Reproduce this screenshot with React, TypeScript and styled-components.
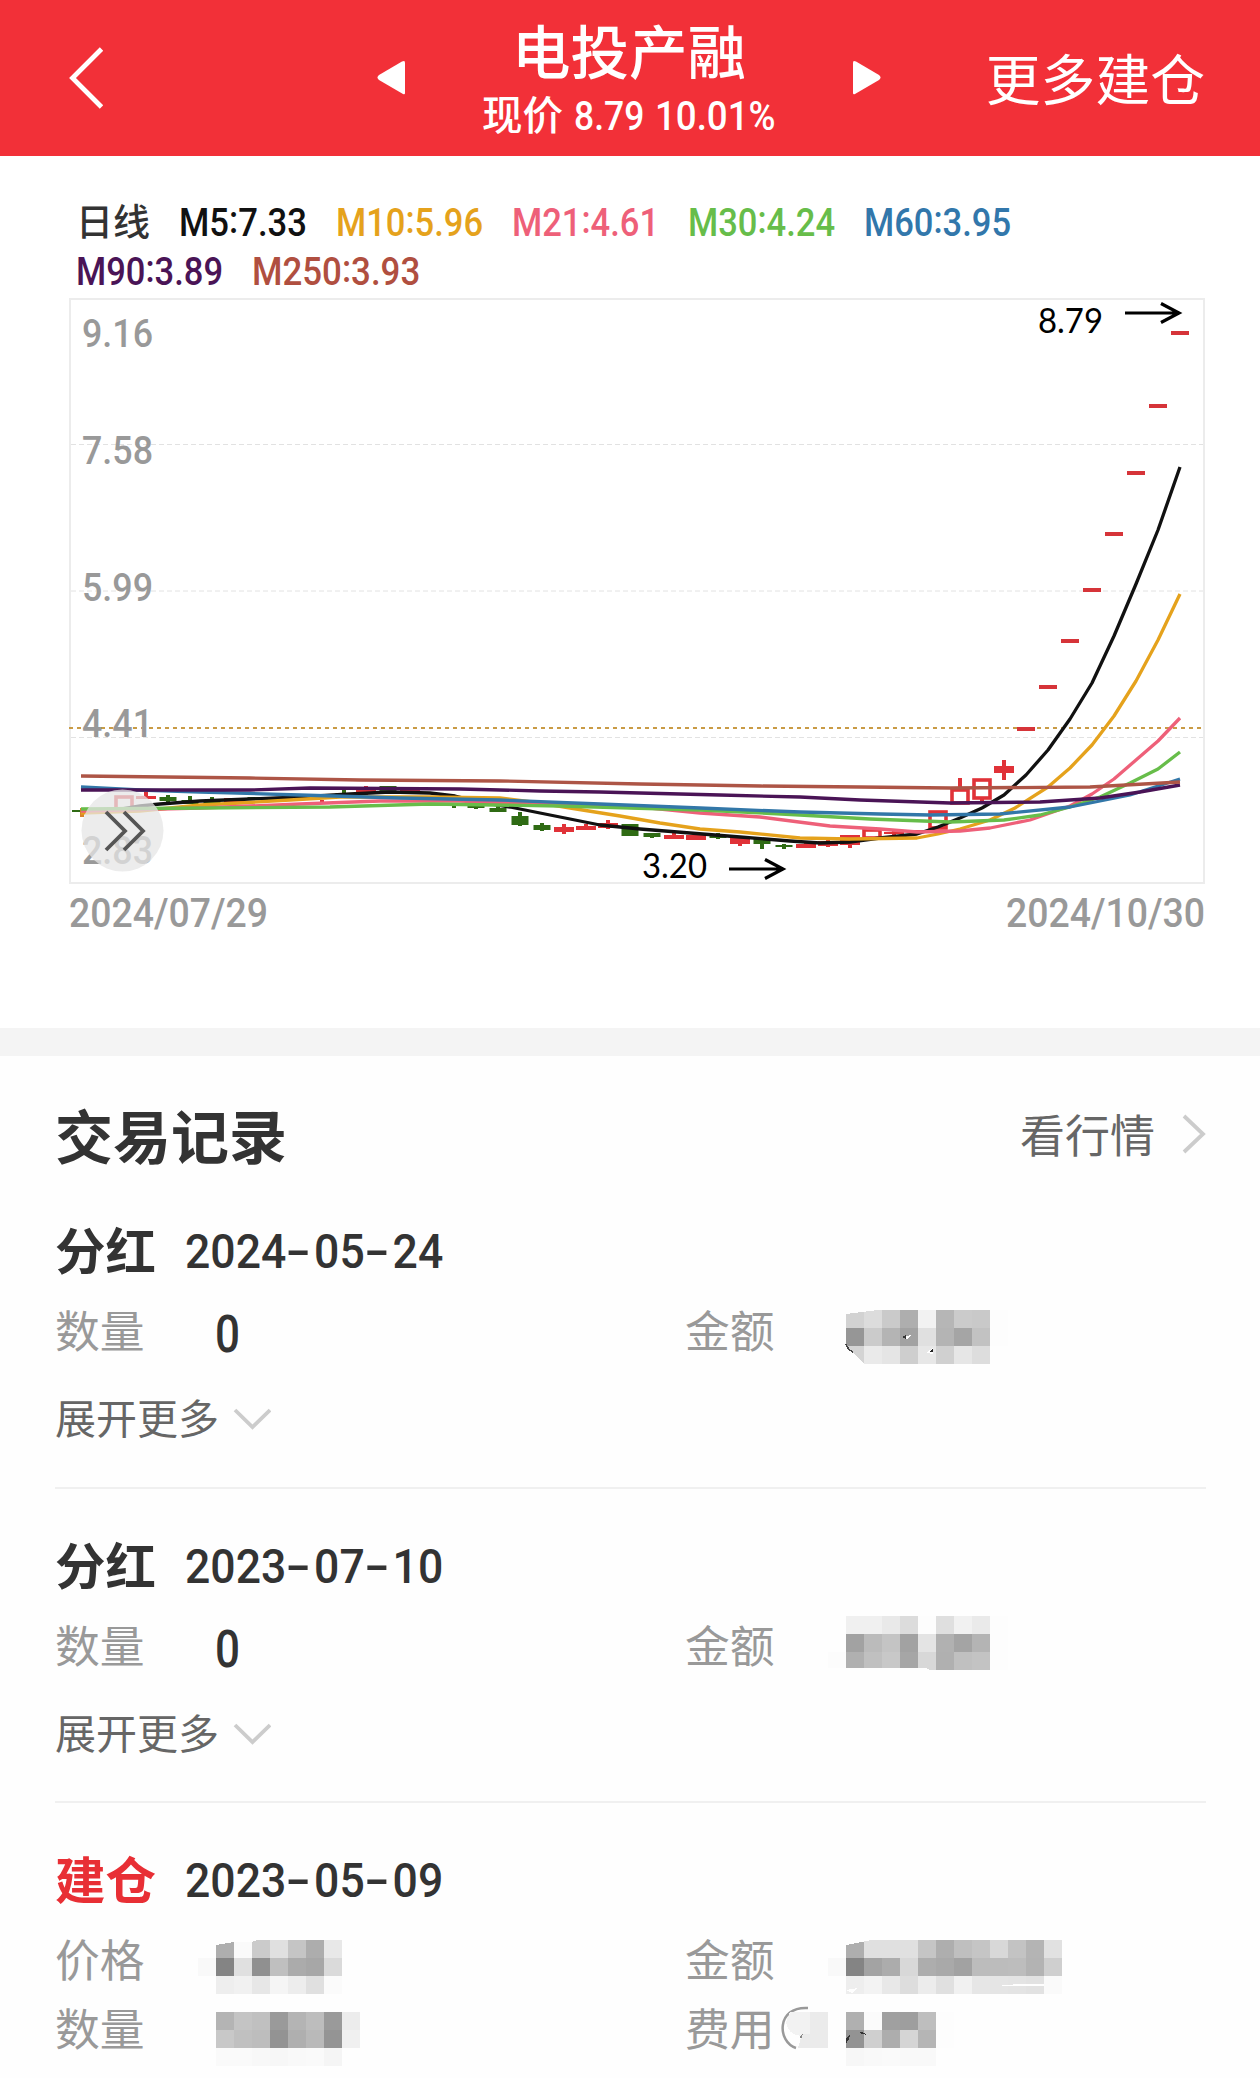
import React, { useLayoutEffect, useRef, useState } from "react";
import styled, { createGlobalStyle } from "styled-components";

const CJK = `"Noto Sans CJK SC", "Noto Sans", sans-serif`;
const DIGITS = `Roboto, "Noto Sans CJK SC", sans-serif`;

const GlobalStyle = createGlobalStyle`
  * { box-sizing: border-box; }
  body { margin: 0; background: #fefefe; font-family: ${CJK}; color: #333; }
`;

/* ---------- condensed numerals ---------- */

const FitBox = styled.span<{ $w: number; $size: number; $weight: number; $color?: string }>`
  display: inline-block;
  flex: none;
  width: ${(p) => p.$w}px;
  line-height: 1;
  white-space: nowrap;
  font-family: ${DIGITS};
  font-size: ${(p) => p.$size}px;
  font-weight: ${(p) => p.$weight};
  color: ${(p) => p.$color || "inherit"};
`;
const FitInner = styled.span`
  display: inline-block;
  transform-origin: left center;
`;
const Dash = styled.span`
  display: inline-block;
  width: 20px;
  margin: 0 7px 0 3px;
  text-align: center;
  transform: translateY(-1px) scaleX(1.65);
`;
const Colon = styled.span`
  display: inline-block;
  transform: translateY(-3px);
`;

function glyphs(text: string) {
  return text.split(/([-:])/).map((part, i) => {
    if (part === "-") return <Dash key={i}>-</Dash>;
    if (part === ":") return <Colon key={i}>:</Colon>;
    return part;
  });
}

function Num({ w, size, weight = 500, color, children }: {
  w: number; size: number; weight?: number; color?: string; children: string;
}) {
  const ref = useRef<HTMLSpanElement>(null);
  const [scale, setScale] = useState(1);
  useLayoutEffect(() => {
    if (ref.current) setScale(w / ref.current.offsetWidth);
  }, [w, size, children]);
  return (
    <FitBox $w={w} $size={size} $weight={weight} $color={color}>
      <FitInner ref={ref} style={{ transform: `scaleX(${scale})` }}>{glyphs(children)}</FitInner>
    </FitBox>
  );
}

/* ---------- header ---------- */

const Page = styled.div`
  width: 1260px;
  height: 2078px;
  overflow: hidden;
  background: #fefefe;
`;
const Header = styled.header`
  display: grid;
  grid-template-columns: 1fr 504px 1fr;
  align-items: center;
  height: 156px;
  padding: 0 55px 0 53px;
  background: #f23038;
  color: #fff;
`;
const BackButton = styled.div`
  padding-left: 14px;
  line-height: 0;
`;
const Switcher = styled.div`
  display: flex;
  align-items: center;
  justify-content: space-between;
`;
const Stock = styled.div`
  display: flex;
  flex-direction: column;
  align-items: center;
  padding-top: 4px;
`;
const StockName = styled.div`
  height: 66px;
  line-height: 60px;
  font-size: 58.5px;
  font-weight: 500;
`;
const StockPrice = styled.div`
  display: flex;
  align-items: baseline;
  gap: 11px;
  height: 56px;
  line-height: 56px;
  font-size: 40.5px;
  font-weight: 500;
`;
const MoreLink = styled.div`
  justify-self: end;
  font-size: 54.8px;
  line-height: 60px;
  padding-bottom: 4px;
  white-space: nowrap;
`;

/* ---------- chart ---------- */

const ChartSection = styled.section`
  height: 872px;
  padding: 42px 55px 0 69px;
  background: #fff;
`;
const Legend = styled.div`
  display: flex;
  flex-wrap: wrap;
  column-gap: 29px;
  height: 99px;
  padding: 0 100px 0 7px;
`;
const LegendItem = styled.div<{ $nudge?: boolean }>`
  display: flex;
  align-items: center;
  height: 48px;
  padding-bottom: ${(p) => (p.$nudge ? 4 : 0)}px;
  padding-top: ${(p) => (p.$nudge ? 0 : 2)}px;
  font-size: 37px;
  font-weight: 500;
  line-height: 48px;
`;
const Plot = styled.svg`
  display: block;
  width: 1136px;
  height: 587px;
`;
const DateAxis = styled.div`
  display: flex;
  justify-content: space-between;
  padding-top: 10px;
`;

const legend: [string, number, string][] = [
  ["M5:7.33", 128, "#111"],
  ["M10:5.96", 147, "#e5a21c"],
  ["M21:4.61", 147, "#ee6079"],
  ["M30:4.24", 147, "#67bd4a"],
  ["M60:3.95", 147, "#3277ab"],
  ["M90:3.89", 147, "#4a1456"],
  ["M250:3.93", 168, "#b04f40"],
];

type Candle = [index: number, top: number, bottom: number, high: number, low: number, kind: "r" | "g" | "h"];
const candles: Candle[] = [
  [2, 797, 809, 797, 809, "h"],
  [3, 796, 799, 791, 799, "r"],
  [4, 797, 801, 795, 803, "g"],
  [5, 800, 804, 796, 804, "g"],
  [6, 801, 804, 797, 806, "g"],
  [7, 798, 803, 798, 803, "r"],
  [8, 797, 800, 797, 800, "g"],
  [9, 798, 800, 797, 801, "g"],
  [12, 793, 796, 790, 797, "g"],
  [13, 788, 793, 786, 795, "r"],
  [14, 786, 792, 786, 793, "g"],
  [15, 790, 794, 790, 794, "r"],
  [16, 798, 801, 798, 801, "g"],
  [17, 803, 806, 803, 808, "g"],
  [18, 805, 808, 804, 809, "g"],
  [19, 808, 812, 806, 812, "g"],
  [20, 816, 825, 812, 826, "g"],
  [21, 825, 830, 823, 831, "g"],
  [22, 827, 832, 824, 834, "r"],
  [23, 826, 830, 824, 830, "r"],
  [24, 823, 828, 820, 829, "r"],
  [25, 824, 836, 824, 836, "g"],
  [26, 833, 837, 833, 838, "g"],
  [27, 835, 839, 833, 839, "r"],
  [28, 835, 840, 833, 840, "r"],
  [29, 835, 838, 833, 839, "g"],
  [30, 837, 844, 837, 846, "r"],
  [31, 838, 844, 838, 849, "g"],
  [32, 845, 847, 844, 849, "g"],
  [33, 844, 848, 842, 848, "r"],
  [34, 841, 846, 840, 847, "r"],
  [35, 835, 845, 835, 848, "r"],
  [36, 830, 838, 829, 838, "h"],
  [37, 832, 834, 831, 836, "r"],
  [38, 830, 832, 830, 833, "r"],
  [39, 812, 828, 812, 828, "h"],
  [40, 790, 803, 778, 803, "h"],
  [41, 780, 798, 780, 802, "h"],
  [42, 766, 773, 760, 780, "r"],
];
const limitUps = [729, 687, 641, 590, 534, 473, 406, 333];

const averages: [string, number[]][] = [
  ["#111", [81, 812, 110, 811, 140, 806, 160, 804, 200, 801, 250, 799, 300, 797, 350, 794, 390, 792, 430, 793, 455, 796, 480, 802, 510, 807, 540, 813, 570, 819, 600, 825, 640, 829, 690, 833, 740, 837, 790, 841, 820, 843, 850, 842, 880, 838, 917, 834, 938, 827, 960, 818, 982, 808, 1004, 795, 1026, 775, 1048, 750, 1070, 719, 1092, 683, 1114, 636, 1136, 584, 1158, 530, 1180, 467]],
  ["#e5a21c", [81, 813, 140, 811, 200, 805, 240, 803, 290, 800, 340, 797, 390, 797, 430, 797, 500, 798, 540, 803, 570, 808, 620, 816, 660, 823, 700, 829, 740, 832, 800, 838, 850, 839, 917, 838, 938, 834, 960, 829, 990, 820, 1015, 808, 1048, 787, 1070, 768, 1092, 745, 1114, 716, 1136, 681, 1158, 640, 1180, 594]],
  ["#ee6079", [81, 811, 200, 808, 300, 804, 380, 801, 460, 801, 560, 805, 650, 808, 700, 813, 760, 817, 830, 826, 880, 829, 917, 832, 960, 831, 990, 828, 1030, 820, 1070, 806, 1092, 794, 1114, 779, 1136, 760, 1158, 741, 1180, 718]],
  ["#67bd4a", [81, 809, 200, 808, 330, 807, 430, 804, 560, 806, 700, 810, 800, 815, 870, 819, 950, 822, 1004, 820, 1040, 815, 1070, 807, 1100, 797, 1130, 783, 1158, 769, 1180, 752]],
  ["#3277a8", [81, 787, 140, 790, 200, 792, 300, 795, 400, 798, 500, 800, 600, 804, 700, 808, 800, 812, 880, 814, 930, 815, 1000, 814, 1070, 807, 1130, 795, 1180, 779]],
  ["#4a1456", [81, 790, 250, 790, 310, 788, 460, 789, 540, 791, 600, 792, 720, 795, 800, 797, 860, 800, 950, 803, 1040, 802, 1100, 798, 1140, 792, 1180, 785]],
  ["#ad5546", [81, 776, 250, 778, 360, 780, 500, 781, 640, 784, 760, 786, 860, 787, 950, 788, 1090, 787, 1180, 782]],
];

const toPoints = (v: number[]) =>
  v.reduce((s, n, i) => s + n + (i % 2 ? " " : ","), "");

const axisLabels: [string, number][] = [
  ["9.16", 347], ["7.58", 464], ["5.99", 601], ["4.41", 737], ["2.83", 864],
];

function CandleChart() {
  return (
    <Plot viewBox="69 297 1136 587">
      <rect x="70" y="299" width="1134" height="584" fill="#fff" stroke="#ececec" strokeWidth="2" />
      {[444.5, 591, 737.5].map((y) => (
        <line key={y} x1="71" x2="1203" y1={y} y2={y} stroke="#e2e2e2" strokeWidth="1" strokeDasharray="5 3" />
      ))}
      <line x1="69" x2="1203" y1="728" y2="728" stroke="#c99b45" strokeWidth="2" strokeDasharray="4 4" />
      {axisLabels.map(([t, y]) => (
        <text key={t} x="82" y={y} textLength="71" lengthAdjust="spacingAndGlyphs" fontFamily="Roboto" fontSize="39.5" fontWeight="500" fill="#999">{t}</text>
      ))}
      <rect x="72" y="810" width="9" height="2" fill="#2f6b14" />
      <rect x="80" y="808" width="4" height="9" fill="#d9822b" />
      {candles.map(([i, top, bottom, high, low, kind]) => {
        const x = 80 + i * 22;
        const color = kind === "g" ? "#2f6b14" : "#e03238";
        return (
          <g key={i}>
            {high < top && <rect x={x - 2} y={high} width="4" height={top - high} fill={color} />}
            {low > bottom && <rect x={x - 2} y={bottom} width="4" height={low - bottom} fill={color} />}
            {kind === "h"
              ? <rect x={x - 8} y={top} width="16" height={bottom - top} fill="none" stroke={color} strokeWidth="3.6" />
              : <rect x={x - (kind === "g" ? 8.5 : 10)} y={top} width={kind === "g" ? 17 : 20} height={bottom - top} fill={color} />}
          </g>
        );
      })}
      <rect x="320" y="800" width="4" height="3" fill="#e03238" />
      {limitUps.map((y, i) => (
        <rect key={y} x={1017 + i * 22} y={y - 2} width="18" height="4" fill="#d63439" />
      ))}
      {averages.map(([color, v]) => (
        <polyline key={color} points={toPoints(v)} fill="none" stroke={color} strokeWidth="3.3" strokeLinejoin="round" />
      ))}
      <g fill="none" stroke="#000" strokeWidth="3.2">
        <path d="M1125 313H1179M1161 303.5L1179 313L1161 322.5" />
        <path d="M729 869H783M765 859.5L783 869L765 878.5" />
      </g>
      <g fontFamily="Lato" fontSize="35" fill="#000">
        <text x="1038" y="333" textLength="65" lengthAdjust="spacingAndGlyphs">8.79</text>
        <text x="642" y="878" textLength="65" lengthAdjust="spacingAndGlyphs">3.20</text>
      </g>
      <circle cx="122.5" cy="830.5" r="41" fill="#e6e6e6" fillOpacity="0.75" />
      <path d="M106 812L125 831L106 850M124 812L143 831L124 850" fill="none" stroke="#555" strokeWidth="3.8" />
    </Plot>
  );
}

/* ---------- trade records ---------- */

const Band = styled.div`
  height: 28px;
  background: #f4f4f4;
`;
const Records = styled.section`
  padding: 48px 54px 0 55px;
`;
const TitleRow = styled.div`
  display: flex;
  align-items: center;
  justify-content: space-between;
  height: 60px;
`;
const Title = styled.h2`
  margin: 0;
  font-size: 58px;
  line-height: 60px;
  font-weight: 700;
`;
const QuoteLink = styled.div`
  display: flex;
  align-items: center;
  gap: 27px;
  font-size: 45px;
  line-height: 56px;
  color: #666;
`;
const Record = styled.article`
  height: 314px;
  padding-top: 44px;
  border-bottom: 2px solid #f0f0f0;
  &:first-of-type { height: 325px; padding-top: 54px; }
  &:last-of-type { border-bottom: 0; }
`;
const RecordHead = styled.div`
  display: flex;
  align-items: center;
  gap: 29px;
  height: 60px;
`;
const Kind = styled.div<{ $buy?: boolean }>`
  font-size: 50.5px;
  line-height: 60px;
  font-weight: 700;
  color: ${(p) => (p.$buy ? "#e82f35" : "#333")};
`;
const RecordDate = styled.div`
  padding-top: 8px;
  line-height: 1;
`;
const Fields = styled.div`
  display: grid;
  grid-template-columns: 630px 1fr;
  grid-auto-rows: 69px;
  padding-top: 17px;
`;
const Field = styled.div`
  display: flex;
  align-items: center;
  height: 69px;
`;
const Label = styled.div`
  width: 161px;
  flex: none;
  display: flex;
  align-items: center;
  padding-bottom: 1px;
  font-size: 44.8px;
  line-height: 60px;
  color: #999;
`;
const Quantity = styled.div`
  padding-top: 10px;
  margin-left: -1px;
  line-height: 1;
`;
const Expand = styled.div`
  display: flex;
  align-items: center;
  gap: 14px;
  height: 60px;
  margin-top: 22px;
  font-size: 41px;
  line-height: 60px;
  color: #666;
  svg { margin-top: 5px; }
`;
const MosaicSvg = styled.svg<{ $dy: number }>`
  display: block;
  flex: none;
  overflow: visible;
  transform: translateY(${(p) => p.$dy}px);
`;

function Mosaic({ rows, dy, children }: { rows: string[]; dy: number; children?: React.ReactNode }) {
  return (
    <MosaicSvg $dy={dy} width="216" height="54" shapeRendering="crispEdges">
      {rows.map((row, y) =>
        row.split(" ").map((c, x) => (
          <rect key={`${x}-${y}`} x={x * 18} y={y * 18} width="18" height="18" fill={`#${c}${c}${c}`} />
        ))
      )}
      {children}
    </MosaicSvg>
  );
}

const ExpandMore = () => (
  <Expand>
    展开更多
    <svg width="38" height="24" viewBox="0 0 38 24">
      <path d="M2 3L19.500 20L37 3" fill="none" stroke="#ccc" strokeWidth="3.8" />
    </svg>
  </Expand>
);

export default function App() {
  return (
    <Page>
      <GlobalStyle />
      <Header>
        <BackButton>
          <svg width="36" height="64" viewBox="0 0 36 64">
            <path d="M34.500 3L5.500 32L34.500 61" fill="none" stroke="#fff" strokeWidth="4.8" />
          </svg>
        </BackButton>
        <Switcher>
          <svg width="28" height="36" viewBox="0 0 28 36">
            <path d="M27 1Q28 1 28 3V33Q28 35 26 34L2 20Q-1 17.500 2 15L25 1.500Z" fill="#fff" />
          </svg>
          <Stock>
            <StockName>电投产融</StockName>
            <StockPrice>
              现价
              <Num w={70} size={40}>8.79</Num>
              <Num w={121} size={40}>10.01%</Num>
            </StockPrice>
          </Stock>
          <svg width="28" height="36" viewBox="0 0 28 36">
            <path d="M1 1Q0 1 0 3V33Q0 35 2 34L26 20Q29 17.500 26 15L3 1.500Z" fill="#fff" />
          </svg>
        </Switcher>
        <MoreLink>更多建仓</MoreLink>
      </Header>

      <ChartSection>
        <Legend>
          <LegendItem $nudge>日线</LegendItem>
          {legend.map(([text, w, color]) => (
            <LegendItem key={text}>
              <Num w={w} size={39} color={color}>{text}</Num>
            </LegendItem>
          ))}
        </Legend>
        <CandleChart />
        <DateAxis>
          <Num w={199} size={40} color="#999">2024/07/29</Num>
          <Num w={199} size={40} color="#999">2024/10/30</Num>
        </DateAxis>
      </ChartSection>

      <Band />

      <Records>
        <TitleRow>
          <Title>交易记录</Title>
          <QuoteLink>
            看行情
            <svg width="24" height="40" viewBox="0 0 24 40">
              <path d="M2 2L21 20L2 38" fill="none" stroke="#ccc" strokeWidth="3.8" />
            </svg>
          </QuoteLink>
        </TitleRow>

        <Record>
          <RecordHead>
            <Kind>分红</Kind>
            <RecordDate><Num w={258} size={48}>2024-05-24</Num></RecordDate>
          </RecordHead>
          <Fields>
            <Field>
              <Label>数量</Label>
              <Quantity><Num w={25} size={51}>0</Num></Quantity>
            </Field>
            <Field>
              <Label>金额</Label>
              <Mosaic
                dy={7}
                rows={["d2 dc ca ae f2 b6 cb c9 fd", "96 cb b4 a2 e0 b4 a5 c2 fd", "d4 ea e5 ce e7 d0 e6 dd fe"]}
              >
                <path d="M0 0H32L0 4ZM0 36L19 54H0Z" fill="#fefefe" />
                <path d="M0 34Q2 40 7 42" fill="none" stroke="#444" strokeWidth="1.500" />
                <path d="M56 27L65 25L61 29Z" fill="#fff" />
                <path d="M56 27L60 25V29Z" fill="#333" />
                <path d="M80 43L87 38V44Z" fill="#fff" />
                <path d="M83 42L87 39V42Z" fill="#222" />
              </Mosaic>
            </Field>
          </Fields>
          <ExpandMore />
        </Record>

        <Record>
          <RecordHead>
            <Kind>分红</Kind>
            <RecordDate><Num w={258} size={48}>2023-07-10</Num></RecordDate>
          </RecordHead>
          <Fields>
            <Field>
              <Label>数量</Label>
              <Quantity><Num w={25} size={51}>0</Num></Quantity>
            </Field>
            <Field>
              <Label>金额</Label>
              <Mosaic
                dy={-2}
                rows={["f0 f0 e9 dc fd df f1 ea fd", "a2 bb c4 a2 e4 b1 a4 b4 fd", "b0 c0 c8 a6 d8 b0 c0 c3 fd"]}
              >
                <path d="M0 52H80L84 54H0Z" fill="#fefefe" />
                <rect x="-18" y="36" width="18" height="16" fill="#fcfcfc" />
              </Mosaic>
            </Field>
          </Fields>
          <ExpandMore />
        </Record>

        <Record>
          <RecordHead>
            <Kind $buy>建仓</Kind>
            <RecordDate><Num w={258} size={48}>2023-05-09</Num></RecordDate>
          </RecordHead>
          <Fields>
            <Field>
              <Label>价格</Label>
              <Mosaic
                dy={8}
                rows={["ae fa cb e0 c5 ad e8", "84 e0 90 bf ab a7 da", "ee f1 e7 f5 ed e0 fb"]}
              >
                <path d="M0 0H42L36 2H18L0 5Z" fill="#fefefe" />
                <rect x="-18" y="18" width="18" height="18" fill="#f9f9f9" />
              </Mosaic>
            </Field>
            <Field>
              <Label>金额</Label>
              <Mosaic
                dy={8}
                rows={["ae e0 e0 e0 c5 ae bf c5 d8 c3 b4 e1", "84 a3 ac d8 ad a9 a2 bc bc bd b3 cf", "ee f3 e8 dd ec e0 f1 e6 e5 e4 e2 fa"]}
              >
                <path d="M0 0H26L0 5Z" fill="#fefefe" />
                <rect x="-18" y="18" width="18" height="18" fill="#f9f9f9" />
                <path d="M152 46Q175 43 198 44V46Q175 47 152 46ZM0 50L12 48L6 53Z" fill="#fefefe" />
              </Mosaic>
            </Field>
            <Field>
              <Label>数量</Label>
              <Mosaic
                dy={11}
                rows={["b4 c4 c0 9a b4 bd 9a ec", "c8 c0 bd 93 af b9 94 f0", "fa fa f8 f7 f9 fa f5 fe"]}
              />
            </Field>
            <Field>
              <Label>费用</Label>
              <Mosaic
                dy={11}
                rows={["b0 fb a0 9e be fd", "93 cf ad d5 b5 fd", "f7 f9 fa f9 f9 fe"]}
              >
                <path d="M-38 -4C-70 -6 -69 30 -50 36" fill="none" stroke="#999" strokeWidth="2.500" shapeRendering="auto" />
                <path d="M-56 0H-36V24Q-58 26 -60 10Z" fill="#f2f2f2" />
                <path d="M-36 0H-18V36H-48L-44 22H-36Z" fill="#ebebeb" />
                <path d="M-46 24L-43 22L-45 27Z" fill="#888" />
                <path d="M0 26L4 23Q3 28 0 32ZM13 20Q18 20 21 23L16 22Z" fill="#333" />
              </Mosaic>
            </Field>
          </Fields>
        </Record>
      </Records>
    </Page>
  );
}
